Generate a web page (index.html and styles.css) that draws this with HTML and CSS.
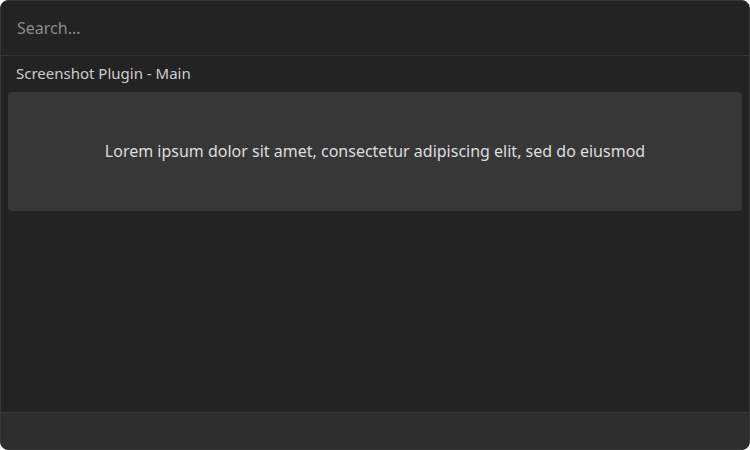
FILE: index.html
```html
<!DOCTYPE html>
<html>
<head>
<meta charset="utf-8">
<link rel="stylesheet" href="styles.css">
</head>
<body>
<div class="window">
  <div class="search">
    <input class="search-input" type="text" placeholder="Search...">
  </div>
  <div class="content">
    <div class="section-title">Screenshot Plugin - Main</div>
    <div class="card">Lorem ipsum dolor sit amet, consectetur adipiscing elit, sed do eiusmod</div>
  </div>
  <div class="footer"></div>
</div>
</body>
</html>
```
FILE: styles.css
```css
html, body {
  margin: 0;
  padding: 0;
  background: #ffffff;
}
.window {
  box-sizing: border-box;
  width: 750px;
  height: 450px;
  background: #232323;
  border: 1px solid #383838;
  border-radius: 8px;
  overflow: hidden;
  display: flex;
  flex-direction: column;
  font-family: "Noto Sans", "Open Sans", sans-serif;
}
.search {
  height: 54px;
  border-bottom: 1px solid #363636;
  display: flex;
  align-items: center;
  padding: 0 16px;
  flex: none;
}
.search-input {
  background: transparent;
  border: none;
  outline: none;
  padding: 0;
  width: 100%;
  font-family: "Noto Sans", "Open Sans", sans-serif;
  font-size: 16px;
  color: #e0e0e0;
}
.search-input::placeholder {
  color: #8c8c8c;
}
.content {
  flex: 1;
  padding: 0 7px;
  display: flex;
  flex-direction: column;
}
.section-title {
  font-size: 15px;
  color: #cdcdcd;
  padding: 6px 8px 0;
  height: 28px;
  box-sizing: border-box;
  line-height: 20px;
  margin-top: 1px;
  margin-bottom: 7px;
}
.card {
  background: #373737;
  border-radius: 4px;
  height: 119px;
  box-sizing: border-box;
  padding-bottom: 2px;
  display: flex;
  align-items: center;
  justify-content: center;
  font-size: 16px;
  color: #dedede;
}
.footer {
  flex: none;
  height: 36px;
  background: #2e2e2e;
  border-top: 1px solid #393939;
}
```
